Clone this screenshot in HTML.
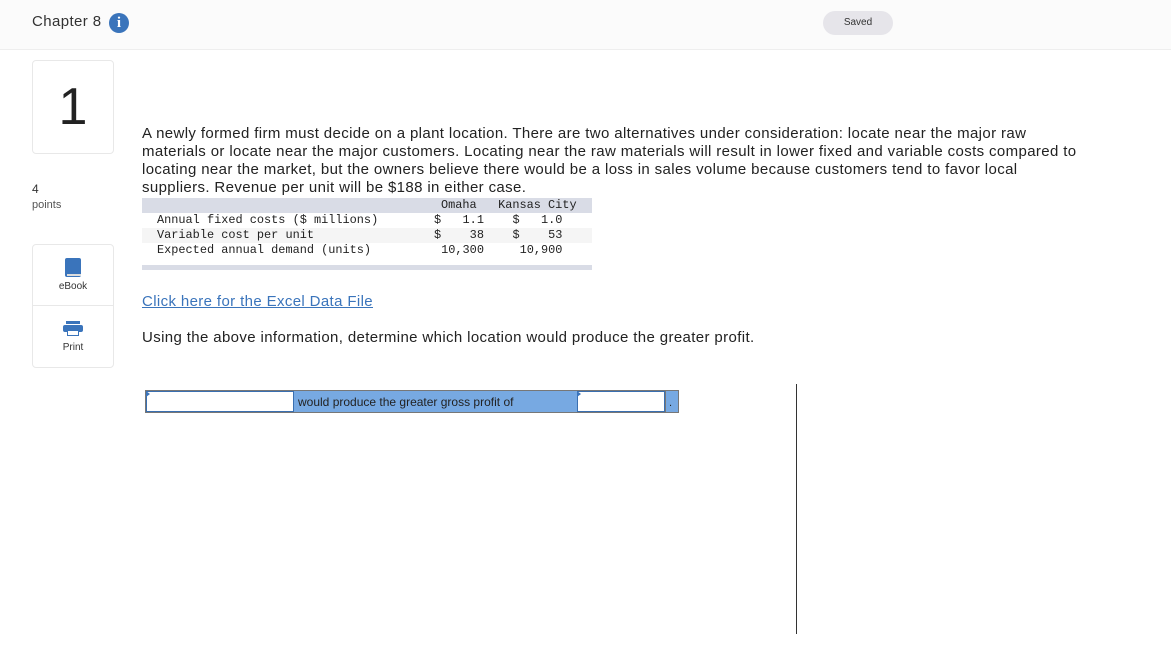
<!DOCTYPE html>
<html><head><style>
body{margin:0;width:1171px;height:668px;background:#fff;font-family:"Liberation Sans",sans-serif;position:relative;overflow:hidden;color:#222}
.hdr{position:absolute;left:0;top:0;width:1171px;height:49px;background:#fbfbfb;border-bottom:1px solid #eee}
.abs{position:absolute}
.t{font-size:15px;letter-spacing:0.37px}
.mono{font-family:"Liberation Mono",monospace;font-size:11.9px;white-space:pre;line-height:15px}
</style></head><body>
<div class="hdr"></div>
<div class="abs" style="left:32px;top:13px;font-size:15px;letter-spacing:0.4px;color:#333">Chapter 8</div>
<div class="abs" style="left:109px;top:13px;width:20px;height:20px;border-radius:50%;background:#3a74bb;color:#fff;font:bold 15px 'Liberation Serif',serif;text-align:center;line-height:20px">i</div>
<div class="abs" style="left:823px;top:11px;width:70px;height:24px;border-radius:12px;background:#e6e5ea;font-size:10px;text-align:center;line-height:24px;color:#333">Saved</div>

<div class="abs" style="left:32px;top:60px;width:80px;height:92px;border:1px solid #e8e8e8;border-radius:4px;text-align:center;font-size:52px;line-height:92px;color:#222">1</div>
<div class="abs" style="left:32px;top:182px;font-size:12px;color:#333">4</div>
<div class="abs" style="left:32px;top:199px;font-size:11px;color:#555">points</div>
<div class="abs" style="left:32px;top:244px;width:80px;height:122px;border:1px solid #e8e8e8;border-radius:4px">
 <div style="height:60px;border-bottom:1px solid #e8e8e8;position:relative">
  <div class="abs" style="left:32px;top:13px;width:16px;height:19px;background:#3a74bb;border-radius:2px"></div>
  <div class="abs" style="left:34px;top:29px;width:14px;height:2px;background:#ddd"></div>
  <div class="abs" style="left:0;width:80px;top:36px;font-size:10px;text-align:center;color:#333">eBook</div>
 </div>
 <div style="position:relative">
  <div class="abs" style="left:33px;top:15px;width:14px;height:3px;background:#3a74bb"></div>
  <div class="abs" style="left:30px;top:19px;width:20px;height:7px;background:#3a74bb;border-radius:2px"></div>
  <div class="abs" style="left:34px;top:24px;width:12px;height:6px;background:#fff;border:1px solid #3a74bb;box-sizing:border-box"></div>
  <div class="abs" style="left:0;width:80px;top:36px;font-size:10px;text-align:center;color:#333">Print</div>
 </div>
</div>

<div class="abs t" style="left:142px;top:125px;width:1020px;line-height:18px;color:#222;white-space:nowrap">A newly formed firm must decide on a plant location. There are two alternatives under consideration: locate near the major raw<br>materials or locate near the major customers. Locating near the raw materials will result in lower fixed and variable costs compared to<br>locating near the market, but the owners believe there would be a loss in sales volume because customers tend to favor local<br>suppliers. Revenue per unit will be $188 in either case.</div>

<div class="abs" style="left:142px;top:198px;width:450px;height:15px;background:#d9dce6"></div>
<div class="abs" style="left:142px;top:228px;width:450px;height:15px;background:#f5f5f5"></div>
<div class="abs" style="left:142px;top:265px;width:450px;height:5px;background:#d9dce6"></div>
<div class="abs mono" style="left:441px;top:198px">Omaha   Kansas City</div>
<div class="abs mono" style="left:157px;top:213px">Annual fixed costs ($ millions)
Variable cost per unit
Expected annual demand (units)</div>
<div class="abs mono" style="left:434px;top:213px">$   1.1    $   1.0
$    38    $    53
 10,300     10,900</div>

<div class="abs t" style="left:142px;top:293px;color:#3a74bb;text-decoration:underline">Click here for the Excel Data File</div>
<div class="abs t" style="left:142px;top:329px;color:#222">Using the above information, determine which location would produce the greater profit.</div>

<div class="abs" style="left:145px;top:390px;width:532px;height:21px;border:1px solid #777;background:#77a9e2"></div>
<div class="abs" style="left:146px;top:391px;width:148px;height:21px;background:#fff;border:1px solid #3a6fb0;box-sizing:border-box"></div>
<div class="abs" style="left:298px;top:395px;font-size:12px;color:#222">would produce the greater gross profit of</div>
<div class="abs" style="left:577px;top:391px;width:88px;height:21px;background:#fff;border:1px solid #3a6fb0;box-sizing:border-box"></div>
<div class="abs" style="left:665px;top:390px;width:1px;height:23px;background:#777"></div>
<div class="abs" style="left:146px;top:391px;width:0;height:0;border-top:3px solid transparent;border-bottom:3px solid transparent;border-left:4px solid #3a74bb"></div>
<div class="abs" style="left:577px;top:391px;width:0;height:0;border-top:3px solid transparent;border-bottom:3px solid transparent;border-left:4px solid #3a74bb"></div>
<div class="abs" style="left:669px;top:397px;font-size:11px">.</div>

<div class="abs" style="left:796px;top:384px;width:1px;height:250px;background:#333"></div>
</body></html>
